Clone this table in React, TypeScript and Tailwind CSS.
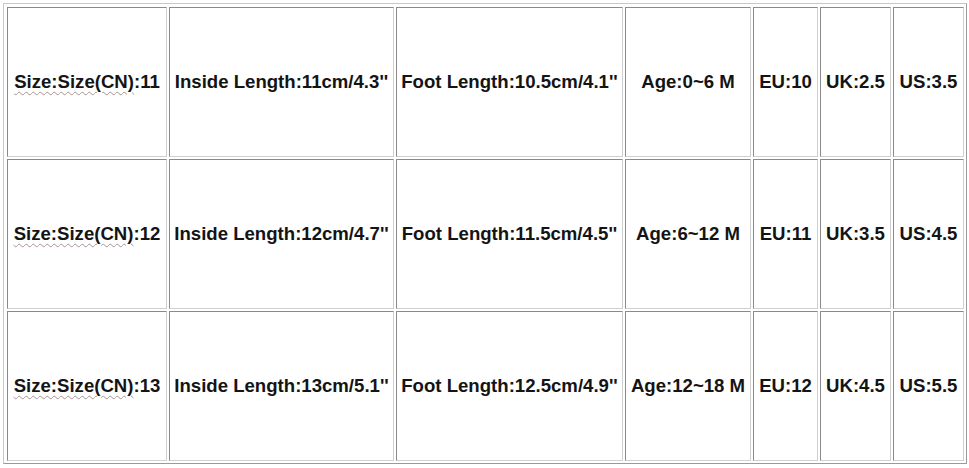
import React from "react";

const rows = [
  ["11", "Inside Length:11cm/4.3''", "Foot Length:10.5cm/4.1''", "Age:0~6 M", "EU:10", "UK:2.5", "US:3.5"],
  ["12", "Inside Length:12cm/4.7''", "Foot Length:11.5cm/4.5''", "Age:6~12 M", "EU:11", "UK:3.5", "US:4.5"],
  ["13", "Inside Length:13cm/5.1''", "Foot Length:12.5cm/4.9''", "Age:12~18 M", "EU:12", "UK:4.5", "US:5.5"],
];

export default function App() {
  return (
    <div className="w-[969px] h-[468px] bg-white pl-[3px] pt-[3px]" style={{ fontFamily: '"Liberation Sans", Arial, sans-serif' }}>
      <div className="inline-block border border-t-[#c8c8c8] border-l-[#c8c8c8] border-r-[#9a9a9a] border-b-[#9a9a9a] pt-[3px] pl-[3px] pr-[2px] pb-[2px]">
        <div className="grid grid-cols-[160px_225px_227px_126px_65px_71px_71px] grid-rows-[150px_150px_150px] gap-[2px]">
          {rows.map((r, i) =>
            r.map((c, j) => (
              <div
                key={`${i}-${j}`}
                className="flex items-center justify-center border border-t-[#8a8a8a] border-l-[#8a8a8a] border-r-[#cfcfcf] border-b-[#cfcfcf] text-[18.6px] font-bold text-[#141414] whitespace-nowrap"
              >
                {j === 0 ? (
                  <span>
                    <span className="underline decoration-wavy decoration-[#a89494] decoration-1 underline-offset-[3px]">Size:Size(CN)</span>:{c}
                  </span>
                ) : (
                  c
                )}
              </div>
            ))
          )}
        </div>
      </div>
    </div>
  );
}
